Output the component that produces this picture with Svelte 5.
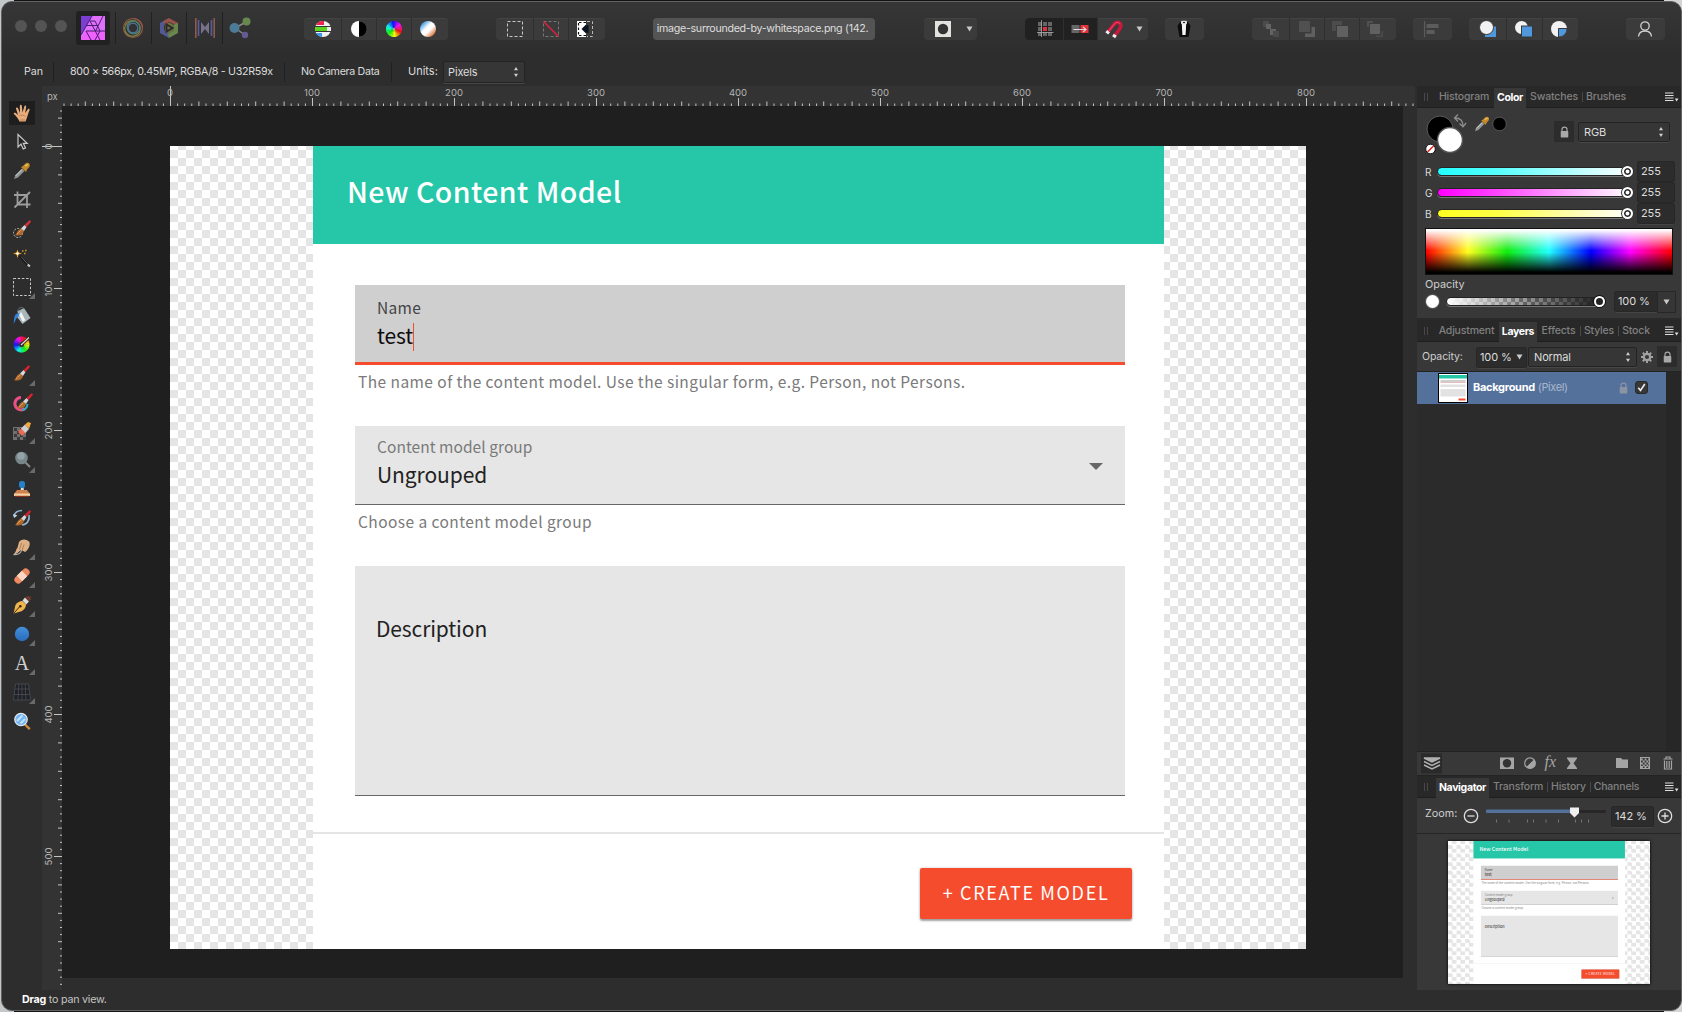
<script>
  // Wedges of a hue circle
  function wheel(cx, cy, r, offset = 0) {
    let out = '';
    const n = 24;
    for (let i = 0; i < n; i++) {
      const a = (i / n) * Math.PI * 2;
      const b = ((i + 1.15) / n) * Math.PI * 2;
      out += `<path d="M${cx} ${cy}L${cx + r * Math.cos(a)} ${cy + r * Math.sin(a)}A${r} ${r} 0 0 1 ${cx + r * Math.cos(b)} ${cy + r * Math.sin(b)}Z" fill="hsl(${(offset + (i * 360) / n) % 360},95%,52%)"/>`;
    }
    return out;
  }

  const dashes = 'fill="none" stroke-dasharray="3 2"';

  // 24 x 24 glyphs of the main toolbar
  const bar = {
    photo: '<rect width="24" height="24" fill="#e070fb"/><path d="M0 0H11L0 19Z" fill="#7a3fd0"/><path d="M0 24L5 15H24V24Z" fill="#ec62fb"/><path d="M11 0L0 19M9 5L19 24M5 15H24M14.500 15L22 0M5 15L10 24M9 5H14L19 15L14 24M6 9.500H17" fill="none" stroke="#4a1c70" stroke-width="1"/>',
    liquify: '<g fill="none" stroke-width="1.200"><circle cx="12" cy="12" r="9.500" stroke="#8a5a45"/><circle cx="11.500" cy="12.500" r="7.800" stroke="#7f8148"/><circle cx="12.500" cy="11.500" r="6.300" stroke="#4c8468"/><circle cx="12" cy="12" r="4.800" stroke="#5273a5"/><path d="M12 2.500a9.500 9.500 0 0 1 9.500 9.500" stroke="#a35048"/></g>',
    develop: '<path d="M12 2L21 7V10L12 6L7 9V4.500Z" fill="#97504a"/><path d="M3 7L7 4.500V14L12 18V22L3 17Z" fill="#535a93"/><path d="M21 7V17L12 22L11 18L17 14V8.500Z" fill="#69864e"/><path d="M8 9L12 6.500L17 9V14L12 18L8 15Z" fill="#6c7340"/><path d="M9.500 8.500L15.500 12L9.500 15.500Z" fill="none" stroke="#2b2b2b" stroke-width="2"/>',
    tone: '<path d="M2.800 2V22M21.200 2V22" stroke="#8d5a50" stroke-width="1.600"/><path d="M5.500 4V20M18.500 4V20" stroke="#585f98" stroke-width="1.600"/><path d="M8 6V18L12 13L16 18V6L12 11Z" fill="#76728c"/>',
    share: '<path d="M7 12L18 6M7 12L17 19" stroke="#8a8a8a" stroke-width="1.500"/><circle cx="6.500" cy="12" r="5" fill="#4c7b98"/><circle cx="18.500" cy="5.500" r="4" fill="#66884f"/><circle cx="17" cy="19" r="3.200" fill="#655b91"/>',
    levels: '<circle cx="12" cy="12" r="8" fill="#f2f2f2"/><path d="M5 8A8 8 0 0 1 13 4V8Z" fill="#f0224e"/><path d="M5 16A8 8 0 0 0 11 20V16Z" fill="#3a96ee"/><rect x="4" y="9" width="16" height="6" fill="#333"/><rect x="4" y="10" width="12" height="4" fill="#5cd31c"/><rect x="16" y="10" width="4" height="4" fill="#eee"/>',
    contrast: '<circle cx="12" cy="12" r="8" fill="#000" stroke="#555" stroke-width=".6"/><path d="M12 4A8 8 0 0 0 12 20Z" fill="#fff"/>',
    hue: wheel(12, 12, 8, 345) + '<circle cx="12" cy="12" r="1" fill="#fff8"/>',
    wb: '<defs><linearGradient id="wb" x1="0" y1="0" x2="1" y2="1"><stop offset=".12" stop-color="#2f8fe0"/><stop offset=".42" stop-color="#fff"/><stop offset=".58" stop-color="#fff"/><stop offset=".9" stop-color="#d9601c"/></linearGradient></defs><circle cx="12" cy="12" r="8" fill="url(#wb)"/>',
    marquee: `<rect x="4.500" y="4.500" width="15" height="15" stroke="#c9c9c9" ${dashes}/>`,
    deselect: `<rect x="4.500" y="4.500" width="15" height="15" stroke="#777" ${dashes}/><path d="M4.500 4.500L19.500 19.500" stroke="#e2203c" stroke-width="1.400"/>`,
    invert: `<rect x="4" y="4" width="9" height="16" fill="#fff"/><path d="M5.500 6V18M6 5.500H13M6 18.500H13" stroke="#111" stroke-width="1.200" stroke-dasharray="2.500 2"/><path d="M13 7.500V16.500L8.500 12Z" fill="#0b1220"/><path d="M13 8.500L15.500 8V16L13 15.500Z" fill="#0b1220"/><path d="M14 4.500H19.500V19.500H14" stroke="#bbb" ${dashes}/>`,
    mask: '<rect x="4" y="4" width="16" height="16" fill="#e4e2df"/><circle cx="12" cy="12" r="5.200" fill="#333"/>',
    grid: '<g fill="#666"><rect x="5" y="5" width="4" height="4"/><rect x="10" y="5" width="4" height="4"/><rect x="15" y="5" width="4" height="4"/><rect x="5" y="10" width="4" height="4"/><rect x="15" y="10" width="4" height="4"/><rect x="5" y="15" width="4" height="4"/><rect x="10" y="15" width="4" height="4"/><rect x="15" y="15" width="4" height="4"/></g><rect x="10" y="10" width="4" height="4" fill="#e2323b"/><path d="M8.500 3V20M4 15.500H20.500" stroke="#aaa" stroke-width=".8"/>',
    move: '<rect x="3.500" y="8" width="8" height="8" fill="#666"/><rect x="12.500" y="8" width="8" height="8" fill="#e2323b"/><path d="M5.500 12.500H18M15 9.800L18 12.500L15 15.200" fill="none" stroke="#ddd" stroke-width="1.100"/>',
    magnet: '<path d="M5.500 15.500L11.500 8C15 3 21 6 18 11.500L12.500 19" fill="none" stroke="#c9193d" stroke-width="3.600"/><path d="M7 14L11.500 8C14 4.500 17 5 18 7" fill="none" stroke="#ee5070" stroke-width="1"/><path d="M6.600 14.200L4.700 16.400M13.300 17.800L11.600 20.200" stroke="#eee" stroke-width="3.600"/>',
    assistant: '<path d="M8 5H16L18.500 9L16.500 20H7.500L5.500 9Z" fill="#0c0c0c"/><path d="M9.800 6.500H14.200L13.600 18H10.400Z" fill="#f5f5f5"/><rect x="9" y="3.800" width="6" height="3.500" rx="1" fill="#ddd"/><path d="M11 5.500H13" stroke="#222"/>',
    front: '<path d="M4 4H10V10H4Z" fill="#4c4c4c"/><path d="M7 7H12V12H17V18H11V12H7Z" fill="#636363"/><path d="M14 14H20V20H14Z" fill="#4a4a4a"/>',
    forward: '<path d="M4 4H15V15H4Z" fill="#505050"/><path d="M16.500 10H20V20H10V16.500H16.500Z" fill="#606060"/>',
    backward: '<path d="M2 4H12V8H6V14H2Z" fill="#4c4c4c"/><rect x="7" y="9" width="11" height="11" fill="#606060"/>',
    back: '<path d="M3 4H9V6H5V10H3Z" fill="#505050"/><rect x="6" y="7" width="10" height="10" fill="#606060"/><path d="M17.500 14H19V20H12V18.500H17.500Z" fill="#4c4c4c"/>',
    align: '<path d="M4.500 4V20" stroke="#5c5c5c" stroke-width="1.200"/><rect x="6.500" y="7" width="12" height="4" fill="#5c5c5c"/><rect x="6.500" y="13" width="8" height="4" fill="#5c5c5c"/>',
    add: '<path d="M11 9.500H20V20H9V15Z" fill="#4f98de"/><circle cx="10.500" cy="10.500" r="7" fill="#f2f2f2" stroke="#383838"/>',
    subtract: '<circle cx="9.500" cy="10.500" r="6.500" fill="#f2f2f2"/><rect x="9.500" y="9" width="11" height="11" fill="#4f98de" stroke="#383838"/>',
    intersect: '<circle cx="12" cy="12" r="8" fill="#f2f2f2"/><path d="M11.500 11.500H20A8 8 0 0 1 11.500 20Z" fill="#4f98de" stroke="#383838"/>',
    user: '<g fill="none" stroke="#d2d2d2" stroke-width="1.300"><circle cx="12" cy="9" r="4.200"/><path d="M5.500 19.500C6 15 9 14 12 14S18 15 18.500 19.500"/></g>'
  };

  const brush = (tip, x = 0, y = 0) => `<g transform="translate(${x} ${y})"><path d="M1 16C3 15 3 11 7 9.500L10 12C9 16 5 17.500 1 16Z" fill="#b0682c"/><path d="M3 15C5 14 5 12 7.500 11" stroke="#dda063" fill="none"/><path d="M7 9.500L10.500 6L12.500 8L10 12Z" fill="#d8d8d8"/><path d="M10.500 6L15.500 1.200L17.200 2.500L12.500 8Z" fill="${tip}"/></g>`;

  const pipette = '<path d="M1 17L2.500 13L9 6.500L11.500 9L5 15.500Z" fill="#8f9394"/><path d="M2.500 14L9 7.500" stroke="#d4d8d8"/><path d="M8 5L10 4L12.500 1.500C15 -.5 18 2 16.300 5L14 7.500L13 10Z" fill="#c58a2a"/><path d="M12 4L15 2.500" stroke="#f3cb73" stroke-width="1.300"/>';

  // 18 x 18 glyphs of the tool column
  const tool = {
    hand: '<path d="M6.500 17.500C5 14 2.500 11.500 .8 10C.5 8.800 2 8.500 3 9.300L5 11L3 4.500C3 3.200 4.600 3 5 4.200L7 9L6.800 1.800C7 .5 8.500 .5 8.800 1.800L9.500 8.500L11.500 2C12 1 13.300 1.300 13.200 2.600L12.200 9L15 5C15.800 4.200 17 5 16.500 6.200C15 9.500 14.500 13 12.500 17.500Z" fill="#e7ac7c"/><path d="M6 12C8 10.500 11 11 12.500 12.500M7 16H12" stroke="#bd7b4e" stroke-width=".9" fill="none"/>',
    arrow: '<path d="M5 1.500V14L8 11L10.200 16L12.500 15L10.300 10.300H14.200Z" fill="#252525" stroke="#c8c8c8" stroke-width="1.200"/>',
    pipette,
    crop: '<path d="M4.500 .5V13.500H17.500M1 4H14V17M1.500 16.500L17 1" fill="none" stroke="#9c9c9c" stroke-width="1.800"/>',
    selbrush: '<circle cx="5" cy="13" r="4.500" fill="none" stroke="#bbb" stroke-dasharray="2 1.300"/>' + brush('#d8313a', 1, -1),
    wand: '<path d="M7 7L15.500 16.500" stroke="#151515" stroke-width="2.600"/><path d="M8 7.500L15.500 16" stroke="#777" stroke-width=".8"/><path d="M14.800 15.500L16.800 17.500" stroke="#ccc" stroke-width="2"/><path d="M4.500 .5L5.500 3.500L9 4.500L5.500 5.500L4.500 9L3.500 5.500L0 4.500L3.500 3.500Z" fill="#f0ae2e"/><circle cx="4.500" cy="4.500" r="1.200" fill="#fff"/><path d="M9 2H10.500M12 1.500H13.500M11 4.500H12.500" stroke="#d99b2c" stroke-width="1.400"/>',
    marquee: '<rect x=".5" y=".5" width="17" height="17" fill="none" stroke="#c8c8c8" stroke-dasharray="2.500 1.700"/>',
    bucket: '<path d="M5 4L11 1L17.500 11L9.500 17L4 10Z" fill="#a9b4b8"/><path d="M7 6L11 14" stroke="#eff5f6" stroke-width="3"/><path d="M4.500 5C5 .5 8 -.5 11 1.500" stroke="#6b7275" fill="none"/><path d="M7 6C2 6.500 1 8 .8 17L3 12L5.500 9Z" fill="#2d82d9"/>',
    gradient: wheel(8.5, 9.5, 8, 70) + '<circle cx="8.500" cy="9.500" r="2.600" fill="#3c3c3c"/><path d="M7.500 10.500L16.500 2" stroke="#222" stroke-width="2.800"/><path d="M8 10L16 2.500" stroke="#ddd" stroke-width="1.200"/>',
    brush: brush('#d8222c'),
    mixer: '<path d="M8 4.500A6.200 6.200 0 1 0 12 15.500" fill="none" stroke="#ec4f86" stroke-width="3"/><path d="M9 17A6.500 6.500 0 0 0 14.500 11" fill="none" stroke="#2dafc3" stroke-width="2"/>' + brush('#d8222c', 3, -1),
    eraser: '<rect x="0" y="5" width="13" height="13" fill="#707070"/><path d="M1 6H4V9H1ZM7 6H10V9H7ZM4 9H7V12H4ZM1 12H4V15H1ZM7 12H10V15H7ZM4 15H7V18H4ZM10 15H13V18H10Z" fill="#3a3a3a"/><path d="M5 10L9 14L13 10L9 5.500Z" fill="#ea6a55"/><path d="M8 6.500L12.500 11L16 7L12 2.500Z" fill="#d0d0d0"/><path d="M12 2.500L16 7L18 1L15 0Z" fill="#f0a93e"/>',
    dodge: '<circle cx="8.500" cy="7" r="6.300" fill="#77868b"/><circle cx="8" cy="5" r="3.800" fill="#94a3a7"/><path d="M12.500 11.500L17 16" stroke="#85898b" stroke-width="2"/>',
    stamp: '<path d="M8 7H10.500L11 11H7.500Z" fill="#d9dee0"/><rect x="6" y="1" width="6" height="7" rx="2.500" fill="#2680c7"/><path d="M4 10H14L17 14H1Z" fill="#d18150"/><rect x="1" y="13.500" width="16" height="2.500" fill="#f2d0a0"/><rect x="2" y="15.800" width="14" height="1.200" fill="#8c2e1c"/>',
    history: '<path d="M1 7C2 3 5 1.500 9 1.500M16 6C17 11 14 15.500 9 16" fill="none" stroke="#8fb3cd" stroke-width="1.700"/><path d="M0 5L1 9L4.500 6.500Z" fill="#bcd7e8"/>' + brush('#d8222c', 1, 0),
    smudge: '<path d="M6 4C8 .5 14 .5 16.500 4C17.500 8 15 12 12 14C10 13 9 12 8 12C6 13 5 16 .5 16.500C2 15 3 13 3.500 11C5 10 5 7 6 4Z" fill="#deb086"/><path d="M8.500 5L6.500 11.500M11 6.500L9 12.500" stroke="#a8774e" stroke-width=".9"/><path d="M.5 16.500C5 17 8 15 8.500 12" stroke="#aaa" stroke-width="1.300" fill="none"/>',
    heal: '<g transform="rotate(-45 9 9)"><rect x="0" y="5.200" width="18" height="7.600" rx="3.500" fill="#ed8a62"/><rect x="5.500" y="5.200" width="7" height="7.600" fill="#fbd6c5"/></g>',
    pen: '<path d="M.5 17.500L2.500 9C4 6.500 7 5 9.500 5L13 8.500C13 11.500 11 14 8.500 15.300Z" fill="#f0b54c"/><path d="M1 17L6.800 10.500" stroke="#3a250c" stroke-width="1"/><circle cx="7.300" cy="10.200" r="1.300" fill="#3a250c"/><path d="M9.500 4.500L12 1.500L16 5.500L13.200 8.500Z" fill="#dedede"/><path d="M12 1.500L14 0L17.800 .5V3.500L16 5.500Z" fill="#70392d"/>',
    ellipse: '<defs><linearGradient id="el" x2="0" y2="1"><stop stop-color="#4390dc"/><stop offset="1" stop-color="#2a6cbd"/></linearGradient></defs><circle cx="9" cy="9" r="7.200" fill="url(#el)"/>',
    text: '<text x="9" y="15.500" text-anchor="middle" font-family="Liberation Serif, serif" font-size="20" fill="#d0d0d0">A</text>',
    mesh: '<path d="M2.500 1H15.500L17.500 17H.5Z" fill="#1e2126"/><path d="M2.500 1H15.500L17.500 17H.5ZM1.800 6H16.200M1.200 11.500H16.800M5.800 1L5 17M9 1V17M12.200 1L13 17" fill="none" stroke="#464a51" stroke-width=".9"/>',
    zoom: '<path d="M11.500 12L16.800 17.200" stroke="#cf8a41" stroke-width="2.400"/><circle cx="8" cy="7.500" r="6.200" fill="#74b4ef" stroke="#e2e8ec" stroke-width="1.300"/><path d="M4 9L9.500 3.500M7.500 11.500L12 7" stroke="#c4e3fd" stroke-width="1.800"/>'
  };

  const tools = [
    ['hand', 0], ['arrow', 0], ['pipette', 0], ['crop', 0], ['selbrush', 0], ['wand', 0], ['marquee', 1], ['bucket', 0],
    ['gradient', 0], ['brush', 1], ['mixer', 0], ['eraser', 1], ['dodge', 1], ['stamp', 0], ['history', 0], ['smudge', 1],
    ['heal', 1], ['pen', 1], ['ellipse', 1], ['text', 1], ['mesh', 1], ['zoom', 0]
  ];

  // Toolbar groups: left gap and cell widths
  const leftGroups = [
    { gap: 46, cells: [['levels', 37], ['contrast', 35], ['hue', 35], ['wb', 37]] },
    { gap: 48, cells: [['marquee', 37], ['deselect', 35], ['invert', 37]] }
  ];
  const rightGroups = [
    { gap: 48, cells: [['front', 37], ['forward', 35], ['backward', 35], ['back', 37]] },
    { gap: 17, cells: [['align', 39]] },
    { gap: 17, cells: [['add', 37], ['subtract', 36], ['intersect', 36]] },
    { gap: 48, cells: [['user', 39]] }
  ];

  const unit = 1.42;
  function ticks(from, to) {
    const list = [];
    for (let v = from; v <= to; v += 5) {
      list.push({ v, pos: v * unit, kind: v % 100 === 0 ? 'major' : v % 20 === 0 ? 'mid' : 'minor' });
    }
    return list;
  }
  const hTicks = ticks(-75, 875);
  const vTicks = ticks(-25, 590);

  const colorTabs = [{ t: 'Histogram', w: 60 }, { t: 'Color', w: 32, on: true }, { t: 'Swatches', w: 56 }, { t: 'Brushes', w: 48, bar: true }];
  const layerTabs = [{ t: 'Adjustment', w: 65 }, { t: 'Layers', w: 38, on: true }, { t: 'Effects', w: 43 }, { t: 'Styles', w: 38, bar: true }, { t: 'Stock', w: 36, bar: true }];
  const navTabs = [{ t: 'Navigator', w: 53, on: true }, { t: 'Transform', w: 58 }, { t: 'History', w: 43, bar: true }, { t: 'Channels', w: 53, bar: true }];
  const channels = ['R', 'G', 'B'];
  const zoomTicks = [10.5, 23, 41.500, 47.500, 60, 72.500, 89.500, 95.500, 102.500];
</script>

{#snippet barIcon(name)}
  <svg class="ic24" viewBox="0 0 24 24">{@html bar[name]}</svg>
{/snippet}

{#snippet group(g)}
  <div class="group" style:margin-left="{g.gap}px">
    {#each g.cells as [name, w]}
      <div class="cell" style:width="{w}px">{@render barIcon(name)}</div>
    {/each}
  </div>
{/snippet}

{#snippet updown()}
  <svg class="updown" viewBox="0 0 6 12"><path d="M1 4.200L3 1L5 4.200ZM1 7.800L3 11L5 7.800Z" fill="#d0d0d0" /></svg>
{/snippet}

{#snippet caret()}
  <svg class="caret" viewBox="0 0 7 6"><path d="M.5 .5H6.500L3.500 5.500Z" fill="#c8c8c8" /></svg>
{/snippet}

{#snippet lock()}
  <svg class="lock" viewBox="0 0 10 13"><path d="M2.200 6V3.800a2.800 2.800 0 0 1 5.600 0V6" fill="none" stroke="#a8a8a8" stroke-width="1.300" /><rect x=".8" y="5.500" width="8.400" height="7" rx=".6" fill="#a8a8a8" /></svg>
{/snippet}

{#snippet tabStrip(tabs, wide)}
  <div class="tabs" class:wide>
    <span class="grip"></span>
    {#each tabs as tab}
      <span class="tab" class:on={tab.on} class:bar={tab.bar} style:width="{tab.w}px">{tab.t}</span>
    {/each}
    <svg class="menu" viewBox="0 0 14 10"><path d="M0 1H8.500M0 3.500H8.500M0 6H8.500M0 8.500H8.500" stroke="#dedede" stroke-width="1.200" /><path d="M9.800 6.500H13.500L11.600 9.500Z" fill="#dedede" /></svg>
  </div>
{/snippet}

{#snippet artwork()}
  <div class="art">
    <div class="card">
      <header>New Content Model</header>
      <div class="field name">
        <span class="label">Name</span>
        <span class="value">test<i class="cursor"></i></span>
      </div>
      <p class="help">The name of the content model. Use the singular form, e.g. Person, not Persons.</p>
      <div class="field select">
        <div class="stack">
          <span class="label">Content model group</span>
          <span class="value">Ungrouped</span>
        </div>
        <svg class="drop" viewBox="0 0 14 7"><path d="M0 0H14L7 7Z" fill="#666" /></svg>
      </div>
      <p class="help two">Choose a content model group</p>
      <div class="field area"><span>Description</span></div>
      <footer><button>+ CREATE MODEL</button></footer>
    </div>
  </div>
{/snippet}

<div class="window">
  <div class="toolbar">
    <div class="lights"><i></i><i></i><i></i></div>
    <div class="persona">{@render barIcon('photo')}</div>
    <div class="personas">
      <span class="p">{@render barIcon('liquify')}</span>
      <span class="p">{@render barIcon('develop')}</span>
      <span class="p">{@render barIcon('tone')}</span>
      <span class="p">{@render barIcon('share')}</span>
    </div>
    {#each leftGroups as g}{@render group(g)}{/each}
    <div class="doc-title">image-surrounded-by-whitespace.png (142.</div>
    <div class="group mask"><div class="cell m">{@render barIcon('mask')}{@render caret()}</div></div>
    <div class="group snap">
      <div class="cell dark g1">{@render barIcon('grid')}</div>
      <div class="cell dark g2">{@render barIcon('move')}</div>
      <div class="cell g3">{@render barIcon('magnet')}{@render caret()}</div>
    </div>
    <div class="group assist"><div class="cell a">{@render barIcon('assistant')}</div></div>
    {#each rightGroups as g}{@render group(g)}{/each}
  </div>

  <div class="context">
    <span class="c1">Pan</span>
    <span class="c2">800 × 566px, 0.45MP, RGBA/8 - U32R59x</span>
    <span class="c3">No Camera Data</span>
    <span class="c4">Units:</span>
    <div class="box units"><span>Pixels</span>{@render updown()}</div>
  </div>

  <div class="main">
    <div class="tools">
      {#each tools as [name, more], i}
        <div class="tool" class:active={i === 0}>
          <svg viewBox="0 0 18 18">{@html tool[name]}</svg>
          {#if more}<i class="more"></i>{/if}
        </div>
      {/each}
    </div>

    <div class="work">
      <svg class="hruler" viewBox="0 0 1373 20">
        <text x="5" y="14">px</text>
        {#each hTicks as t}
          <line x1={128.5 + t.pos} x2={128.5 + t.pos} y2="20" y1={t.v === 0 ? 0 : t.kind === 'major' ? 12 : t.kind === 'mid' ? 15.5 : 17.5} />
          {#if t.kind === 'major'}<text x={128 + t.pos} y="10" text-anchor="middle">{t.v}</text>{/if}
        {/each}
      </svg>
      <div class="row">
        <svg class="vruler" viewBox="0 0 20 884">
          {#each vTicks as t}
            <line y1={40.5 + t.pos} y2={40.5 + t.pos} x2="20" x1={t.v === 0 ? 0 : t.kind === 'major' ? 12 : t.kind === 'mid' ? 16 : 18} />
            {#if t.kind === 'major'}<text transform="translate(10 {40.5 + t.pos}) rotate(-90)" text-anchor="middle">{t.v}</text>{/if}
          {/each}
        </svg>
        <div class="canvas">{@render artwork()}</div>
      </div>
    </div>

    <div class="side">
      {@render tabStrip(colorTabs, false)}
      <div class="color">
        <div class="swrow">
          <svg class="swatches" viewBox="0 0 90 46">
            <circle cx="18" cy="17" r="13" fill="#000" stroke="#5a5a5a" />
            <circle cx="28" cy="28" r="12.500" fill="#fff" stroke="#555" stroke-width="1.500" />
            <circle cx="8.500" cy="37" r="4.800" fill="#fff" stroke="#111" /><path d="M5.500 40L11.500 34" stroke="#e02020" stroke-width="1.500" />
            <path d="M33 6C38 6 41 9 41 14M36 2.500L32.500 6L36 9.500M37.500 11.500L41 14.800L44 11" fill="none" stroke="#8d8d8d" stroke-width="1.300" />
            <g transform="translate(52 4) scale(.9)">{@html pipette}</g>
            <circle cx="77.500" cy="12" r="6.800" fill="#000" stroke="#555" />
          </svg>
          <span class="lockbox">{@render lock()}</span>
          <div class="box rgb"><span>RGB</span>{@render updown()}</div>
        </div>
        {#each channels as c}
          <div class="channel">
            <b>{c}</b>
            <div class="track {c}"><i class="knob"></i></div>
            <div class="num">255</div>
          </div>
        {/each}
        <div class="spectrum"></div>
        <div class="oplabel">Opacity</div>
        <div class="oprow">
          <i class="dot"></i>
          <div class="optrack"><i class="knob dark"></i></div>
          <div class="num big">100 %</div>
          <div class="numdrop">{@render caret()}</div>
        </div>
      </div>

      {@render tabStrip(layerTabs, false)}
      <div class="lopts">
        <span class="lo">Opacity:</span>
        <div class="num lnum"><span>100 %</span>{@render caret()}</div>
        <div class="box blend"><span>Normal</span>{@render updown()}</div>
        <svg class="gear" viewBox="0 0 12 12"><circle cx="6" cy="6" r="3.200" fill="none" stroke="#a2a2a2" stroke-width="2.200" /><path d="M6 0V2.200M6 9.800V12M0 6H2.200M9.800 6H12M1.800 1.800L3.300 3.300M8.700 8.700L10.200 10.200M10.200 1.800L8.700 3.300M3.300 8.700L1.800 10.200" stroke="#a2a2a2" stroke-width="2" /></svg>
        <span class="lockbox l2">{@render lock()}</span>
      </div>
      <div class="layers">
        <div class="layer">
          <svg class="thumb" viewBox="0 0 30 30">
            <rect width="30" height="30" fill="#000" /><rect x="1" y="1" width="28" height="28" fill="#fff" />
            <rect x="1" y="2" width="28" height="3.500" fill="#26c6a8" />
            <rect x="2.500" y="7" width="25" height="2.600" fill="#cfcfcf" /><rect x="2.500" y="9.600" width="25" height=".4" fill="#e88" />
            <rect x="2.500" y="11.500" width="25" height="2.600" fill="#e2e2e2" /><rect x="2.500" y="16" width="25" height="7.500" fill="#e2e2e2" />
            <rect x="20.500" y="25.500" width="7" height="2" fill="#f64c2e" />
          </svg>
          <strong>Background</strong><span class="kind">(Pixel)</span>
          <span class="dim">{@render lock()}</span>
          <svg class="check" viewBox="0 0 13 13"><rect x=".5" y=".5" width="12" height="12" rx="2.500" fill="#383838" stroke="#292929" /><path d="M3.300 6.800L5.500 9.500L9.800 3" fill="none" stroke="#eee" stroke-width="1.600" /></svg>
        </div>
      </div>
      <svg class="lbar" viewBox="0 0 264 24">
        <rect x="4" y="1.500" width="21" height="20" fill="#2a2a2a" />
        <path d="M7 6H23L15 10ZM7 9.500L15 13.500L23 9.500M7 13L15 17L23 13" fill="none" stroke="#b0b0b0" stroke-width="1.500" /><path d="M7 6H23L15 9.500Z" fill="#b0b0b0" />
        <rect x="83" y="5.500" width="14" height="11.500" fill="#a5a5a5" /><circle cx="90" cy="11.200" r="4.200" fill="#333" />
        <circle cx="113" cy="11.200" r="5.300" fill="none" stroke="#a5a5a5" stroke-width="1.200" /><path d="M117 7.500A5.300 5.300 0 0 1 109.300 15Z" fill="#a5a5a5" />
        <text x="127.500" y="15" font-family="Liberation Serif, serif" font-style="italic" font-size="16" fill="#a5a5a5">fx</text>
        <path d="M150 5.500H160V6.500L156.500 11.200L160 16V17H150V16L153.500 11.200L150 6.500Z" fill="#a5a5a5" />
        <path d="M199 6H204L205.500 7.500H211V16H199Z" fill="#a5a5a5" />
        <rect x="223.500" y="5.500" width="9" height="11" fill="none" stroke="#a5a5a5" /><path d="M224 7.500H232M224 11.500H232M225.800 9.500H233M224 15H232M225.800 13.500H233" stroke="#a5a5a5" stroke-width="1.800" stroke-dasharray="1.800 1.800" />
        <path d="M246.500 7H255.500M249 6.500V5H253V6.500M247.500 8.500V17H254.500V8.500M249.800 9V16M252.200 9V16" fill="none" stroke="#a5a5a5" stroke-width="1.200" />
      </svg>

      {@render tabStrip(navTabs, true)}
      <div class="zoomrow">
        <span class="zl">Zoom:</span>
        <svg class="pm" viewBox="0 0 16 16"><circle cx="8" cy="8" r="6.700" /><path d="M4.500 8H11.500" /></svg>
        <svg class="zslider" viewBox="0 0 122 24">
          <rect x="1" y="6" width="119" height="3" rx="1.500" fill="#272727" /><rect x="0" y="5.500" width="88" height="3.500" rx="1" fill="#54719c" />
          {#each zoomTicks as x}<line x1={x} x2={x} y1="15.500" y2="18.500" stroke="#757575" />{/each}
          <path d="M84 3.500H93V9L88.500 13.500L84 9Z" fill="#f0f0f0" />
        </svg>
        <div class="num znum">142 %</div>
        <svg class="pm" viewBox="0 0 16 16"><circle cx="8" cy="8" r="6.700" /><path d="M4.500 8H11.500M8 4.500V11.500" /></svg>
      </div>
      <div class="nav"><div class="mini">{@render artwork()}</div></div>
    </div>
  </div>

  <div class="status"><b>Drag</b> to pan view.</div>
</div>

<style>
  :global(body) { background: linear-gradient(90deg, #c4c7c8 0 14px, #131313 14px 1664px, #d4d4d4 1664px); overflow: hidden; }
  :global(*) { box-sizing: border-box; }
  svg { display: block; flex: none; }
  i { display: block; }

  .window {
    width: 1681px; height: 1010px; margin: 1px 0 0 1px; overflow: hidden;
    border: 1px solid #606263; border-radius: 11px; background: #2d2d2d;
    font: 11px/14px Inter, "Liberation Sans", sans-serif; color: #dcdcdc; white-space: nowrap;
    display: flex; flex-direction: column;
  }

  .toolbar { height: 55px; flex: none; display: flex; align-items: flex-start; padding-top: 16px; background: linear-gradient(#363636, #2d2d2d); }
  .ic24 { width: 24px; height: 24px; }
  .lights { display: flex; gap: 8px; margin: 2px 0 0 13px; }
  .lights i { width: 12px; height: 12px; border-radius: 50%; background: #545454; }
  .persona { width: 34px; height: 34px; margin: -7px 0 0 9px; padding: 5px; border-radius: 3px; background: #212121; }
  .personas { display: flex; margin: -6px 0 0 5px; }
  .p { width: 35.700px; height: 32px; border-left: 1px solid #202020; display: flex; align-items: center; justify-content: center; }
  .group { height: 22px; display: flex; border-radius: 4px; background: #3b3b3b; box-shadow: inset 0 1px #434343; overflow: hidden; flex: none; }
  .cell { display: flex; align-items: center; justify-content: center; }
  .cell:first-child:not(:last-child) { padding-left: 2px; }
  .cell:last-child:not(:first-child) { padding-right: 3px; }
  .cell + .cell { border-left: 1px solid #2f2f2f; }
  .doc-title { width: 222px; height: 22px; margin-left: 48px; margin-right: 1px; padding: 4px 4px; border-radius: 4px; background: #545454; color: #dedede; overflow: hidden; flex: none; font-size: 10.700px; letter-spacing: -.31px; }
  .mask { margin-left: 48px; }
  .cell.m { width: 53px; justify-content: flex-start; gap: 11px; padding-left: 7px; }
  .snap { margin-left: 48px; }
  .dark { background: #212121; }
  .g1 { width: 38px; }
  .g2 { width: 34px; }
  .cell.g3 { width: 51px; justify-content: flex-start; padding-left: 4px; gap: 10px; }
  .assist { margin-left: 17px; }
  .a { width: 39px; }
  .caret { width: 7px; height: 6px; }
  .updown { width: 6px; height: 12px; }

  .context { height: 29px; flex: none; display: flex; align-items: center; padding-left: 22px; }
  .context > span { height: 20px; line-height: 19px; border-right: 1px solid #202020; }
  .c1 { width: 30px; font-size: 10.700px; letter-spacing: -.1px; }
  .c2 { width: 231px; padding-left: 16px; font-size: 10.700px; letter-spacing: -.3px; }
  .c3 { width: 107px; padding-left: 16px; font-size: 10.700px; letter-spacing: -.33px; }
  .context .c4 { width: 51px; padding-left: 16px; border: 0; }
  .box { display: flex; align-items: center; justify-content: space-between; padding: 0 5px; border: 1px solid #232323; border-radius: 2px; background: #363636; box-shadow: 0 1px #474747; letter-spacing: -.15px; }
  .units { width: 82px; height: 22px; padding-left: 4px; }

  .main { flex: none; height: 904px; display: flex; }
  .tools { width: 40px; padding-top: 12.500px; flex: none; }
  .tool { width: 26px; height: 28.950px; margin-left: 7px; display: flex; align-items: center; justify-content: center; position: relative; }
  .tool svg { width: 18px; height: 18px; overflow: visible; }
  .active { background: linear-gradient(#1e1e1e, #1e1e1e) center / 26px 24px no-repeat; }
  .more { position: absolute; right: 0; bottom: 2px; border-left: 6px solid transparent; border-bottom: 6px solid #6a6a6a; }

  .work { width: 1375px; flex: none; }
  .hruler { width: 1373px; height: 20px; background: #333; }
  .row { display: flex; }
  .vruler { width: 20px; height: 884px; background: #333; }
  .hruler line, .vruler line { stroke: #c4c4c4; stroke-width: 1; }
  .hruler text, .vruler text { font-size: 9.500px; fill: #b4b4b4; }
  .canvas { width: 1341px; height: 872px; padding: 40px 0 0 108px; background: #1f1f1f; }

  .art { width: 1136px; height: 803px; padding-left: 143px; background: repeating-conic-gradient(#e5e5e5 0 25%, #fff 0 50%) 0 -4px / 16px 16px; font-family: "Noto Sans CJK SC", "Noto Sans", sans-serif; }
  .card { width: 851px; height: 803px; background: #fff; }
  header { height: 98px; padding-left: 34px; line-height: 90px; background: #26c6a8; color: #fff; font-size: 28.500px; font-weight: 500; letter-spacing: .45px; }
  .field { width: 770px; margin-left: 42px; padding-left: 22px; color: #222; }
  .name { height: 80px; margin-top: 41px; padding-top: 9px; background: #cfcfcf; border-bottom: 3px solid #f64c2e; }
  .label, .value { display: block; }
  .label { font-size: 15.500px; line-height: 26px; letter-spacing: .05px; color: #7a7a7a; }
  .name .label { color: #444; letter-spacing: .3px; }
  .value { font-size: 21px; line-height: 30px; letter-spacing: -.08px; }
  .name .value { color: #0c0c0c; }
  .cursor { display: inline-block; width: 1px; height: 28px; vertical-align: -7px; background: #f64c2e; }
  .help { height: 34px; margin: 0 0 27px 45px; line-height: 33px; font-size: 15.500px; letter-spacing: .44px; color: #7a7a7a; }
  .select { height: 79px; padding-top: 6.500px; background: #e6e6e6; border-bottom: 1px solid #666; display: flex; }
  .stack { flex: 1; }
  .drop { width: 14px; height: 7px; margin: 30px 22px 0 0; }
  .two { margin-bottom: 27px; }
  .area { height: 230px; padding: 47px 0 0 21px; background: #e6e6e6; border-bottom: 1px solid #666; font-size: 21px; line-height: 30px; letter-spacing: -.12px; }
  footer { height: 117px; margin-top: 36px; border-top: 2px solid #e5e5e5; display: flex; justify-content: flex-end; padding: 34px 32px 0 0; }
  button { width: 212px; height: 51px; padding: 0; border: 0; border-radius: 2px; background: #f64c2e; color: #fff; font: 18px/48px "Noto Sans CJK SC", "Noto Sans", sans-serif; letter-spacing: 1.650px; box-shadow: 0 2px 2px #0005, 0 0 3px #0003; display: flex; justify-content: center; align-items: flex-start; }

  .side { width: 264px; flex: none; background: #383838; }
  .tabs { height: 22px; display: flex; align-items: flex-end; background: #282828; border-bottom: 1px solid #1f1f1f; color: #808080; }
  .grip { width: 4px; height: 8px; margin: 0 6px 6px 7px; border: solid #484848; border-width: 0 1px; }
  .wide .grip { margin-right: 8px; }
  .tab { height: 21px; line-height: 22px; text-align: center; font-size: 10.500px; font-weight: 500; letter-spacing: -.17px; }
  .tab.on { height: 20px; line-height: 19px; margin-bottom: -1px; background: #383838; color: #fff; font-weight: 700; font-size: 10.500px; letter-spacing: -.35px; }
  .bar { background: linear-gradient(#484848, #484848) 0 6px / 1px 10px no-repeat; }
  .menu { width: 14px; height: 10px; margin: 0 2px 5px auto; }

  .color { height: 212px; padding-left: 8px; border-bottom: 2px solid #2a2a2a; }
  .swrow { display: flex; align-items: center; height: 53px; }
  .swatches { width: 90px; height: 46px; margin: 0 0 0 -3px; }
  .lockbox { width: 20px; height: 21px; margin: -6px 0 0 42px; background: #2c2c2c; display: flex; align-items: center; justify-content: center; }
  .lock { width: 9px; height: 12px; }
  .rgb { width: 92px; height: 20px; margin: -6px 0 0 4px; }
  .channel { height: 21px; display: flex; align-items: center; }
  .channel b { width: 12px; font-weight: 400; font-size: 10px; }
  .track { width: 195px; height: 9px; border-radius: 5px; border: 1px solid #242424; box-shadow: 0 1px #777; display: flex; justify-content: flex-end; align-items: center; }
  .R { background: linear-gradient(90deg, #2ff, #5ff 30%, #fff); }
  .G { background: linear-gradient(90deg, #f0f, #f4f 30%, #fff); }
  .B { background: linear-gradient(90deg, #ff2, #ff4 30%, #fff); }
  .knob { width: 11px; height: 11px; margin-right: -2px; flex: none; border-radius: 50%; background: #fff; border: 2px solid #fff; box-shadow: inset 0 0 0 1.500px #222, 0 0 0 1px #333; }
  .knob.dark { background: #222; box-shadow: 0 0 0 1px #111; margin-right: -2px; }
  .num { width: 36px; height: 19px; margin-left: 6px; padding-left: 3px; line-height: 19px; background: #2c2c2c; border-radius: 2px; box-shadow: 0 0 0 1px #272727, 0 2px #454545; letter-spacing: -.1px; }
  .spectrum { width: 248px; height: 47px; margin-top: 4px; border: 1px solid #111; background: linear-gradient(#fff 2%, #fff0 48%, #0000 52%, #000 96%), linear-gradient(90deg, red, #ff2 17%, #1e1 33%, #2ff 50%, #00f 67%, #f0f 83%, red); }
  .oplabel { height: 17px; line-height: 19px; font-size: 10.800px; color: #cfcfcf; }
  .oprow { display: flex; align-items: center; height: 19px; }
  .dot { width: 13px; height: 13px; margin-left: 1px; border-radius: 50%; background: #fff; box-shadow: 0 0 0 1px #555; }
  .optrack { width: 158px; height: 9px; margin-left: 7px; border-radius: 5px; border: 1px solid #222; box-shadow: 0 1px #777; display: flex; justify-content: flex-end; align-items: center; background: linear-gradient(90deg, #fff, #fff0 50%, #1c1c1c), repeating-conic-gradient(#999 0 25%, #606060 0 50%) 0 0 / 8px 8px; }
  .big { width: 43px; margin-left: 11px; }
  .numdrop { width: 17px; height: 20px; background: #363636; box-shadow: 0 0 0 1px #272727; display: flex; align-items: center; justify-content: center; }

  .lopts { height: 30px; display: flex; align-items: center; padding-left: 5px; border-bottom: 1px solid #232323; }
  .lo { width: 55px; font-size: 10.500px; letter-spacing: -.1px; color: #cfcfcf; }
  .lnum { width: 49px; margin: 1px 0 0; display: flex; align-items: center; justify-content: space-between; padding-right: 3px; }
  .blend { width: 109px; height: 20px; margin-left: 2px; }
  .gear { width: 12px; height: 12px; margin-left: 4px; }
  .l2 { margin: 0 0 0 4px; }
  .layers { height: 380px; background: #2b2b2b; border-right: 15px solid #272727; border-bottom: 1px solid #222; }
  .layer { height: 32px; background: #54719c; display: flex; align-items: center; padding-left: 21px; color: #fff; }
  .thumb { width: 30px; height: 30px; }
  strong { margin: -2px 0 0 5px; font-size: 11px; letter-spacing: -.3px; }
  .kind { margin: -2px 0 0 3px; color: #a9b7cd; letter-spacing: -.4px; }
  .dim { margin-left: auto; opacity: .65; }
  .check { width: 13px; height: 13px; margin: -2px 18px 0 7px; }
  .lbar { width: 264px; height: 24px; box-shadow: inset 0 -1px #232323; }

  .zoomrow { height: 36px; display: flex; align-items: center; padding-left: 8px; border-bottom: 1px solid #252525; }
  .zl { width: 38px; margin-top: -3px; font-size: 10.800px; color: #cfcfcf; }
  .pm { width: 16px; height: 16px; fill: none; stroke: #dedede; stroke-width: 1.300; }
  .zslider { width: 122px; height: 24px; margin: 0 4px 0 7px; }
  .znum { width: 41px; margin: 1px 4px 0 0; }
  .nav { height: 156px; padding: 7px 0 0 31px; }
  .mini { width: 202px; height: 143px; overflow: hidden; box-shadow: 0 0 3px #000; }
  .mini .art { transform: scale(.178); transform-origin: 0 0; background-size: 48px 48px; }

  .status { padding: 3px 0 0 20px; color: #c4c4c4; font-size: 10.700px; letter-spacing: -.22px; }
  .status b { color: #fff; }
</style>
